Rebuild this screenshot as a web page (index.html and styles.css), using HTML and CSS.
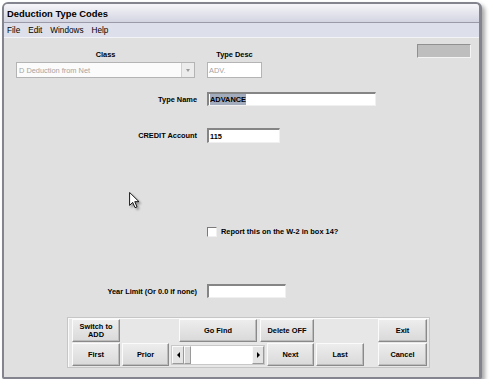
FILE: index.html
```html
<!DOCTYPE html>
<html lang="en">
<head>
    <meta charset="UTF-8">
    <title>Deduction Type Codes</title>
    <link rel="stylesheet" href="styles.css">
</head>
<body>

<div class="window">
    <div class="titlebar">Deduction Type Codes</div>
    <div class="menubar">
        <span>File</span>
        <span>Edit</span>
        <span>Windows</span>
        <span>Help</span>
    </div>

    <div class="content">
        <!-- Class / Type Desc -->
        <div class="top-row">
            <div class="class-grid">
                <div class="col-label">Class</div>
                <div class="col-label">Type Desc</div>
                <div class="select">
                    <span class="select-text">D Deduction from Net</span>
                    <span class="drop"><span class="tri-down"></span></span>
                </div>
                <div class="field disabled">ADV.</div>
            </div>
            <div class="status-box"></div>
        </div>

        <div class="form-row name-row">
            <label>Type Name</label>
            <div class="field name-field"><span class="selected">ADVANCE</span></div>
        </div>

        <div class="form-row credit-row">
            <label>CREDIT Account</label>
            <div class="field credit-field">115</div>
        </div>

        <div class="form-row check-row">
            <span></span>
            <div class="check-wrap">
                <span class="checkbox"></span>
                <span>Report this on the W-2 in box 14?</span>
            </div>
        </div>

        <div class="form-row year-row">
            <label>Year Limit (Or 0.0 if none)</label>
            <div class="field year-field"></div>
        </div>

        <!-- Botones -->
        <div class="button-panel">
            <div class="btn two-line">Switch to<br>ADD</div>
            <div class="btn go-find">Go Find</div>
            <div class="btn delete">Delete OFF</div>
            <div class="btn exit">Exit</div>

            <div class="btn">First</div>
            <div class="btn">Prior</div>
            <div class="scroller">
                <span class="arrow-btn"><span class="tri-left"></span></span>
                <span class="thumb"></span>
                <span class="track"></span>
                <span class="arrow-btn"><span class="tri-right"></span></span>
            </div>
            <div class="btn">Next</div>
            <div class="btn">Last</div>
            <span></span>
            <div class="btn">Cancel</div>
        </div>
    </div>

    <!-- Cursor del mouse -->
    <svg class="cursor" width="11" height="17" viewBox="0 0 12 19">
        <path d="M0.5,0.5 L0.5,15 L4,11.6 L6.6,17.5 L8.8,16.6 L6.3,10.8 L11,10.8 Z" fill="#ffffff" stroke="#000000" stroke-width="1"/>
    </svg>
</div>

</body>
</html>
```

FILE: styles.css
```css
body {
    margin: 0;
    padding: 0;
    background-color: #ffffff;
    font-family: "Liberation Sans", Arial, sans-serif;
}
.window {
    position: relative;
    margin: 2px 0 0 2px;
    width: 480px;
    height: 377px;
    box-sizing: border-box;
    display: flex;
    flex-direction: column;
    border: 2px solid #84848f;
    border-right-width: 3px;
    border-radius: 6px 6px 2px 2px;
    box-shadow: 3px 3px 4px rgba(0, 0, 0, 0.35);
    background-color: #e0e0e0;
    overflow: hidden;
}
.titlebar {
    height: 18px;
    line-height: 19px;
    padding-left: 3px;
    font-size: 9.4px;
    font-weight: bold;
    color: #000;
    background: linear-gradient(#f6f6fa, #d2d4e0);
    border-bottom: 1px solid #9a9aa8;
}
.menubar {
    height: 14px;
    display: flex;
    align-items: center;
    gap: 8px;
    padding-left: 3px;
    font-size: 8.2px;
    color: #000;
    background-color: #dde0ea;
    border-bottom: 1px solid #f2f3f7;
}
.content {
    flex: 1;
    font-size: 7.4px;
    font-weight: bold;
    color: #000;
}
.top-row {
    display: flex;
    align-items: flex-start;
    padding: 6px 8px 0 12px;
}
.class-grid {
    margin-top: 6px;
    display: grid;
    grid-template-columns: 179px 55px;
    column-gap: 12px;
    row-gap: 3px;
}
.col-label {
    text-align: center;
    line-height: 9px;
    height: 9px;
}
.select {
    height: 16px;
    box-sizing: border-box;
    display: flex;
    align-items: center;
    border: 1px solid #b4b4b4;
    background-color: #fbfbfb;
}
.select-text {
    flex: 1;
    padding-left: 2px;
    font-weight: normal;
    color: #a4a4a4;
}
.drop {
    width: 12px;
    height: 14px;
    display: flex;
    align-items: center;
    justify-content: center;
    background-color: #ececec;
    border-left: 1px solid #d0d0d0;
}
.tri-down {
    border-left: 2.5px solid transparent;
    border-right: 2.5px solid transparent;
    border-top: 3px solid #9a9a9a;
}
.status-box {
    margin-left: auto;
    width: 54px;
    height: 14px;
    box-sizing: border-box;
    background-color: #bebebe;
    border: 1px solid;
    border-color: #909090 #f4f4f4 #f4f4f4 #909090;
}
.field {
    box-sizing: border-box;
    height: 14px;
    display: flex;
    align-items: center;
    padding-left: 1px;
    background-color: #ffffff;
    border-style: solid;
    border-width: 2px 1px 1px 2px;
    border-color: #858585 #f0f0f0 #f0f0f0 #858585;
}
.field.disabled {
    height: 16px;
    border: 1px solid #b4b4b4;
    font-weight: normal;
    color: #a4a4a4;
}
.form-row {
    display: grid;
    grid-template-columns: 193px 1fr;
    column-gap: 10px;
    align-items: center;
}
.form-row label {
    text-align: right;
}
.name-row {
    margin-top: 14px;
}
.name-field {
    width: 169px;
}
.selected {
    background-color: #a3acbd;
    padding: 1px 0;
}
.credit-row {
    margin-top: 22px;
}
.credit-field {
    width: 73px;
    height: 15px;
}
.check-row {
    margin-top: 84px;
    line-height: 10px;
}
.check-wrap {
    display: flex;
    align-items: center;
    gap: 4px;
}
.checkbox {
    width: 10px;
    height: 10px;
    box-sizing: border-box;
    background-color: #ffffff;
    border: 1px solid;
    border-color: #7a7a7a #f0f0f0 #f0f0f0 #7a7a7a;
}
.year-row {
    margin-top: 47px;
}
.year-field {
    width: 79px;
}
.button-panel {
    margin: 19px 0 0 63px;
    width: 363px;
    box-sizing: border-box;
    display: grid;
    grid-template-columns: 48px 47px 94px 47px 48px 10px 49px;
    grid-template-rows: 23px 23px;
    column-gap: 2px;
    row-gap: 1px;
    padding: 1px 3px 1px 4px;
    background-color: #e7e7e7;
    border: 1px solid #c6c6c6;
    box-shadow: inset 1px 1px #fafafa;
}
.btn {
    display: flex;
    align-items: center;
    justify-content: center;
    text-align: center;
    line-height: 8px;
    background: linear-gradient(#ededed, #d9d9d9);
    border: 1px solid;
    border-color: #fbfbfb #8a8a8a #8a8a8a #fbfbfb;
    box-shadow: inset -1px -1px #bcbcbc;
}
.go-find {
    grid-column: 3;
    margin: 0 8px;
}
.delete {
    grid-column: 4;
    margin-left: -7px;
}
.exit {
    grid-column: 7;
}
.scroller {
    display: flex;
    margin: 2px 0 1px;
    background-color: #ffffff;
    border: 1px solid #c8c8c8;
}
.arrow-btn {
    width: 10px;
    display: flex;
    align-items: center;
    justify-content: center;
    background-color: #e4e4e4;
    border: 1px solid;
    border-color: #fafafa #9a9a9a #9a9a9a #fafafa;
}
.thumb {
    width: 5px;
    background-color: #dadada;
    border: 1px solid;
    border-color: #fafafa #9a9a9a #9a9a9a #fafafa;
}
.track {
    flex: 1;
    background-color: #ffffff;
}
.tri-left {
    border-top: 3px solid transparent;
    border-bottom: 3px solid transparent;
    border-right: 3px solid #000;
}
.tri-right {
    border-top: 3px solid transparent;
    border-bottom: 3px solid transparent;
    border-left: 3px solid #000;
}
.cursor {
    position: absolute;
    left: 125px;
    top: 188px;
    filter: drop-shadow(2px 2px 1px rgba(0, 0, 0, 0.35));
}
```
